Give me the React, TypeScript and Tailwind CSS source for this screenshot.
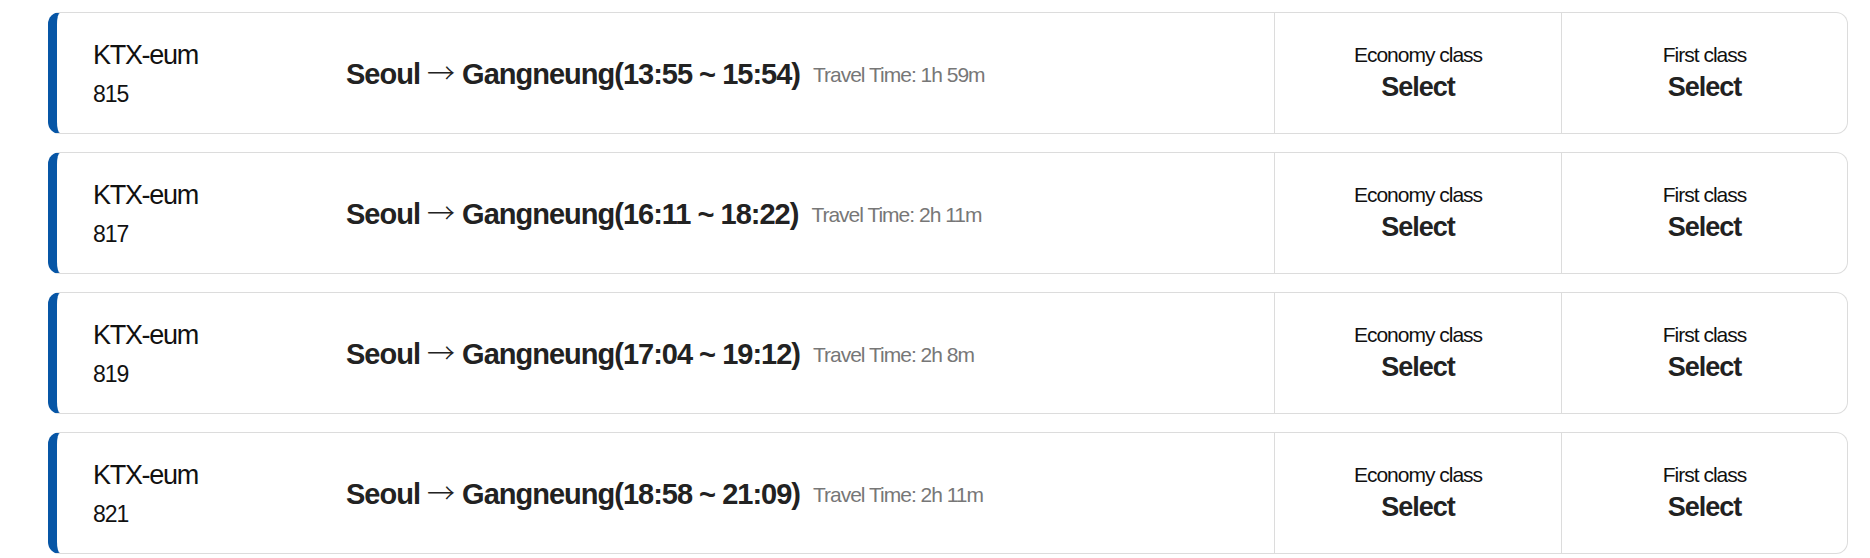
const trains = [
  { name: 'KTX-eum', no: '815', from: 'Seoul', to: 'Gangneung', dep: '13:55', arr: '15:54', travel: '1h 59m' },
  { name: 'KTX-eum', no: '817', from: 'Seoul', to: 'Gangneung', dep: '16:11', arr: '18:22', travel: '2h 11m' },
  { name: 'KTX-eum', no: '819', from: 'Seoul', to: 'Gangneung', dep: '17:04', arr: '19:12', travel: '2h 8m' },
  { name: 'KTX-eum', no: '821', from: 'Seoul', to: 'Gangneung', dep: '18:58', arr: '21:09', travel: '2h 11m' },
];

function SeatCell({ label, last }: { label: string; last?: boolean }) {
  return (
    <div
      className={`flex flex-col items-center justify-center border-l border-[#dcdcdc] pb-[2px] ${
        last ? 'w-[286px]' : 'w-[287px]'
      }`}
    >
      <span className="text-[21px] leading-[26px] text-[#111]">{label}</span>
      <span className="mt-[3px] text-[27px] leading-[32px] font-bold text-[#222]">Select</span>
    </div>
  );
}

export default function App() {
  return (
    <div
      className="min-h-screen bg-white pt-[12px] pl-[48px] tracking-[-1px]"
      style={{ fontFamily: '"Liberation Sans", Arial, sans-serif' }}
    >
      <div className="flex w-[1800px] flex-col gap-[18px]">
        {trains.map((t) => (
          <div
            key={t.no}
            className="flex h-[122px] rounded-[12px] border border-l-[9px] border-[#dcdcdc] border-l-[#0756a6] bg-white"
          >
            <div className="flex w-[289px] flex-col justify-center pl-[36px]">
              <span className="text-[27px] leading-[32px] tracking-[-1.3px] text-[#111]">{t.name}</span>
              <span className="mt-[9px] text-[23px] leading-[28px] text-[#111]">{t.no}</span>
            </div>

            <div className="flex flex-1 items-center">
              <span className="text-[29px] leading-[32px] font-bold text-[#222]">
                {t.from}{' '}
                <span className="font-['Noto_Sans_CJK_KR',sans-serif] text-[28px] font-light leading-[32px] tracking-normal">
                  →
                </span>{' '}
                {t.to}({t.dep} ~ {t.arr})
              </span>
              <span className="ml-[13px] pt-[3px] text-[21px] text-[#777]">Travel Time: {t.travel}</span>
            </div>

            <SeatCell label="Economy class" />
            <SeatCell label="First class" last />
          </div>
        ))}
      </div>
    </div>
  );
}
